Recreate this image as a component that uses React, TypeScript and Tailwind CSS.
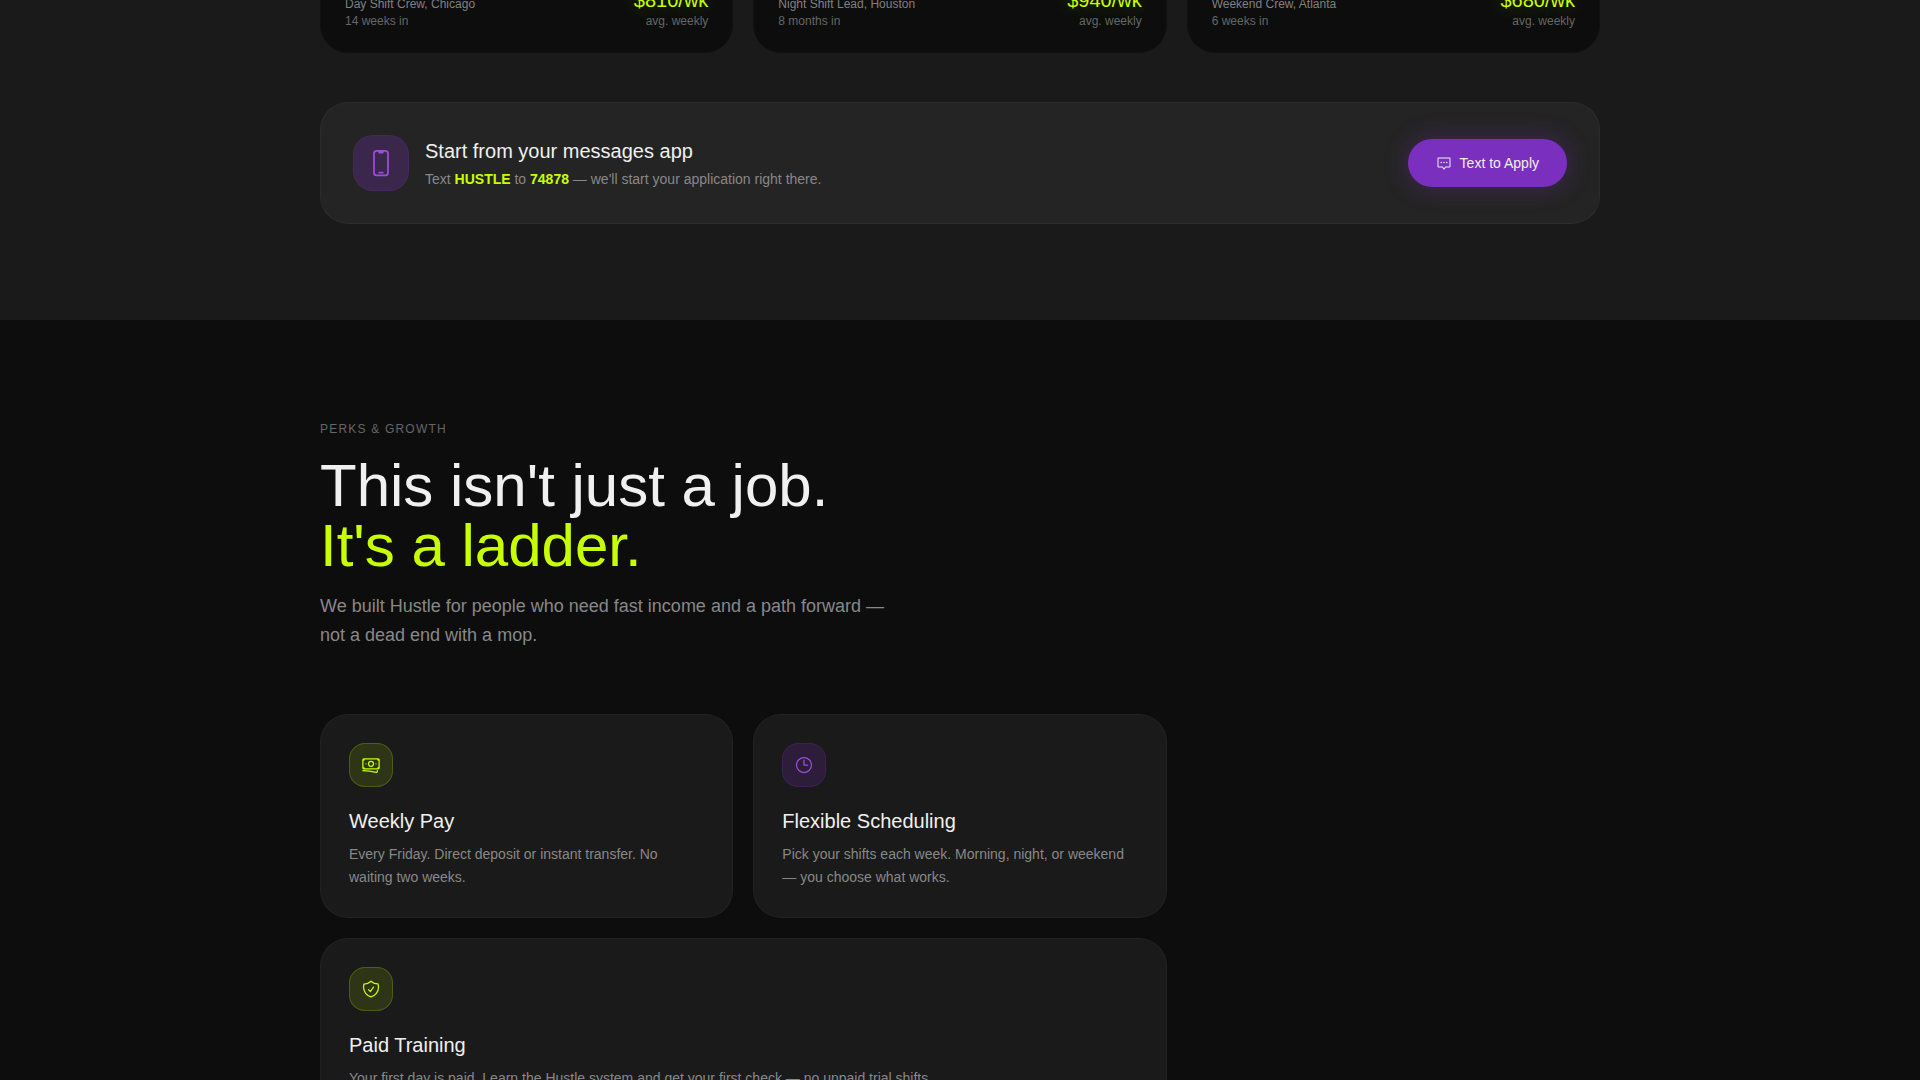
import { HiOutlineBanknotes, HiOutlineClock, HiOutlineShieldCheck, HiOutlineDevicePhoneMobile } from 'react-icons/hi2';
import { PiChatCenteredDots } from 'react-icons/pi';

const stories = [
  { who: 'Day Shift Crew, Chicago', since: '14 weeks in', pay: '$810/wk' },
  { who: 'Night Shift Lead, Houston', since: '8 months in', pay: '$940/wk' },
  { who: 'Weekend Crew, Atlanta', since: '6 weeks in', pay: '$680/wk' },
];

export default function App() {
  return (
    <div className="h-screen overflow-hidden bg-[#0d0d0d] font-['Liberation_Sans',Arial,sans-serif]">
      <section className="bg-[#1a1a1a] pb-24">
        <div className="mx-auto max-w-[1280px]">
          <div className="grid grid-cols-3 gap-5">
            {stories.map((s) => (
              <div key={s.who} className="-mt-[11px] flex items-end justify-between rounded-b-[28px] border border-[#111111] bg-[#0d0d0d] px-6 pb-[23px]">
                <div>
                  <p className="text-xs leading-4 text-[#808080]">{s.who}</p>
                  <p className="mt-px text-xs leading-4 text-[#666666]">{s.since}</p>
                </div>
                <div className="text-right">
                  <p className="text-xl leading-5 text-[#c8ff00] [text-shadow:0_0_20px_rgba(200,255,0,0.3)]">{s.pay}</p>
                  <p className="mt-[3px] text-xs leading-4 text-[#666666]">avg. weekly</p>
                </div>
              </div>
            ))}
          </div>
          <div className="mt-[49px] flex items-center justify-between rounded-[28px] border border-white/[0.04] bg-[#242424] px-8 py-8">
            <div className="flex items-center gap-4">
              <div className="flex h-14 w-14 items-center justify-center rounded-[20px] border border-[#7b2fbe]/20 bg-[#7b2fbe]/25">
                <HiOutlineDevicePhoneMobile className="h-7 w-7 text-[#9b4fd6]" />
              </div>
              <div>
                <h3 className="text-xl leading-7 text-[#f0f0f0]">Start from your messages app</h3>
                <p className="mt-1 text-sm leading-5 text-[#888888]">
                  Text <span className="font-bold text-[#c8ff00]">HUSTLE</span> to <span className="font-bold text-[#c8ff00]">74878</span> — we'll start your application right there.
                </p>
              </div>
            </div>
            <button className="flex h-12 items-center gap-2 rounded-full bg-[#7b2fbe] px-7 text-sm text-[#f0f0f0] shadow-[0_0_24px_rgba(123,47,190,0.35)]">
              <PiChatCenteredDots className="h-4 w-4" />
              Text to Apply
            </button>
          </div>
        </div>
      </section>

      <section className="pt-[101px]">
        <div className="mx-auto max-w-[1280px]">
          <p className="text-xs leading-4 tracking-[0.1em] text-[#666666]">PERKS &amp; GROWTH</p>
          <h2 className="mt-[19px] text-6xl leading-none text-[#f0f0f0]">
            This isn't just a job.
            <br />
            <span className="text-[#c8ff00]">It's a ladder.</span>
          </h2>
          <p className="mt-4 max-w-[576px] text-lg leading-relaxed text-[#888888]">
            We built Hustle for people who need fast income and a path forward — not a dead end with a mop.
          </p>
          <div className="mt-[63px] grid grid-cols-3 gap-5">
            <Perk icon={<HiOutlineBanknotes className="h-5 w-5 text-[#c8ff00]" />} tone="lime" title="Weekly Pay" text="Every Friday. Direct deposit or instant transfer. No waiting two weeks." />
            <Perk icon={<HiOutlineClock className="h-5 w-5 text-[#9b4fd6]" />} tone="purple" title="Flexible Scheduling" text="Pick your shifts each week. Morning, night, or weekend — you choose what works." />
            <div className="col-span-2">
              <Perk icon={<HiOutlineShieldCheck className="h-5 w-5 text-[#c8ff00]" />} tone="lime" title="Paid Training" text="Your first day is paid. Learn the Hustle system and get your first check — no unpaid trial shifts." />
            </div>
          </div>
        </div>
      </section>
    </div>
  );
}

function Perk({ icon, tone, title, text }: { icon: React.ReactNode; tone: 'lime' | 'purple'; title: string; text: string }) {
  return (
    <div className="rounded-[28px] border border-white/[0.04] bg-[#1a1a1a] p-7">
      <div className={tone === 'lime'
        ? 'flex h-11 w-11 items-center justify-center rounded-2xl border border-[#c8ff00]/20 bg-[#c8ff00]/[0.12]'
        : 'flex h-11 w-11 items-center justify-center rounded-2xl border border-[#7b2fbe]/20 bg-[#7b2fbe]/20'}>
        {icon}
      </div>
      <h3 className="mt-5 text-xl leading-7 text-[#f0f0f0]">{title}</h3>
      <p className="mt-2 text-sm leading-[23px] text-[#888888]">{text}</p>
    </div>
  );
}
